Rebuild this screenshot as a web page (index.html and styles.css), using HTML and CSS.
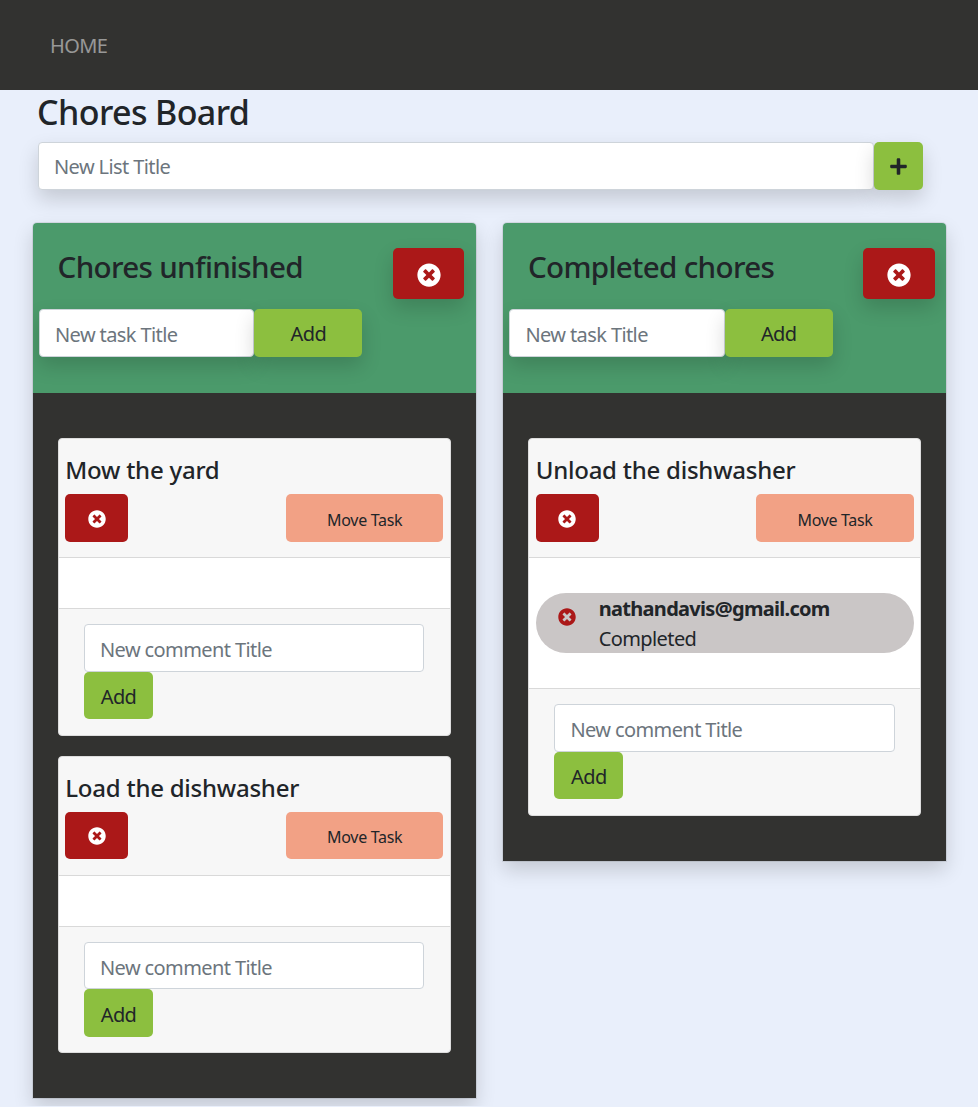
FILE: index.html
```html
<!DOCTYPE html>
<html lang="en">
<head>
<meta charset="utf-8">
<title>Chores Board</title>
<link rel="stylesheet" href="styles.css">
</head>
<body>
<svg class="defs" aria-hidden="true">
  <symbol id="times" viewBox="0 0 512 512"><path d="M256 8C119 8 8 119 8 256s111 248 248 248 248-111 248-248S393 8 256 8zm121.6 313.1c4.7 4.7 4.7 12.3 0 17L338 377.6c-4.7 4.7-12.3 4.7-17 0L256 312l-65.1 65.6c-4.7 4.7-12.3 4.7-17 0L134.4 338c-4.7-4.7-4.7-12.3 0-17l65.6-65-65.6-65.1c-4.7-4.7-4.7-12.3 0-17l39.6-39.6c4.7-4.7 12.3-4.7 17 0l65 65.7 65.1-65.6c4.7-4.7 12.3-4.7 17 0l39.6 39.6c4.7 4.7 4.7 12.3 0 17L312 256l65.6 65.1z"/></symbol>
  <symbol id="plus" viewBox="0 0 448 512"><path d="M416 208H272V64c0-17.67-14.33-32-32-32h-32c-17.67 0-32 14.33-32 32v144H32c-17.67 0-32 14.33-32 32v32c0 17.67 14.33 32 32 32h144v144c0 17.67 14.33 32 32 32h32c17.67 0 32-14.33 32-32V304h144c17.67 0 32-14.33 32-32v-32c0-17.67-14.33-32-32-32z"/></symbol>
</svg>
<nav class="nav"><a class="nav-link" href="#">HOME</a></nav>
<main class="page">
  <h1 class="page-title">Chores Board</h1>
  <form class="new-list">
    <input class="field shadow field-list" placeholder="New List Title">
    <button class="btn green shadow btn-plus" type="button"><svg class="ico-plus"><use href="#plus"/></svg></button>
  </form>
  <div class="board">
    <section class="list">
      <header class="list-head">
        <div class="list-top">
          <h2 class="list-title">Chores unfinished</h2>
          <button class="btn red shadow btn-del-list" type="button"><svg class="ico-lg"><use href="#times"/></svg></button>
        </div>
        <form class="new-task">
          <input class="field shadow field-task" placeholder="New task Title">
          <button class="btn green shadow btn-add-task" type="button">Add</button>
        </form>
      </header>
      <div class="list-body">
        <article class="card">
          <div class="card-head">
            <h3 class="card-title">Mow the yard</h3>
            <div class="card-actions">
              <button class="btn red btn-del-card" type="button"><svg class="ico-sm"><use href="#times"/></svg></button>
              <button class="btn salmon btn-move" type="button">Move Task</button>
            </div>
          </div>
          <div class="card-comments"></div>
          <form class="card-foot">
            <input class="field field-comment" placeholder="New comment Title">
            <button class="btn green btn-add-comment" type="button">Add</button>
          </form>
        </article>
        <article class="card">
          <div class="card-head">
            <h3 class="card-title">Load the dishwasher</h3>
            <div class="card-actions">
              <button class="btn red btn-del-card" type="button"><svg class="ico-sm"><use href="#times"/></svg></button>
              <button class="btn salmon btn-move" type="button">Move Task</button>
            </div>
          </div>
          <div class="card-comments"></div>
          <form class="card-foot">
            <input class="field field-comment" placeholder="New comment Title">
            <button class="btn green btn-add-comment" type="button">Add</button>
          </form>
        </article>
      </div>
    </section>
    <section class="list">
      <header class="list-head">
        <div class="list-top">
          <h2 class="list-title">Completed chores</h2>
          <button class="btn red shadow btn-del-list" type="button"><svg class="ico-lg"><use href="#times"/></svg></button>
        </div>
        <form class="new-task">
          <input class="field shadow field-task" placeholder="New task Title">
          <button class="btn green shadow btn-add-task" type="button">Add</button>
        </form>
      </header>
      <div class="list-body">
        <article class="card">
          <div class="card-head">
            <h3 class="card-title">Unload the dishwasher</h3>
            <div class="card-actions">
              <button class="btn red btn-del-card" type="button"><svg class="ico-sm"><use href="#times"/></svg></button>
              <button class="btn salmon btn-move" type="button">Move Task</button>
            </div>
          </div>
          <div class="card-comments has-comment">
            <div class="comment">
              <svg class="ico-comment"><use href="#times"/></svg>
              <div class="comment-text">
                <strong class="comment-author">nathandavis@gmail.com</strong>
                <span class="comment-body">Completed</span>
              </div>
            </div>
          </div>
          <form class="card-foot">
            <input class="field field-comment" placeholder="New comment Title">
            <button class="btn green btn-add-comment" type="button">Add</button>
          </form>
        </article>
      </div>
    </section>
  </div>
</main>
</body>
</html>
```
FILE: styles.css
```css
* { box-sizing: border-box; }
html, body { margin: 0; padding: 0; }
body {
  background: #e9effb;
  color: #212529;
  font-family: "Noto Sans", "Open Sans", sans-serif;
  font-size: 20px;
  letter-spacing: -0.03em;
}
.defs { display: none; }
h1, h2, h3 { margin: 0; font-weight: 500; }

.nav { height: 90px; background: #323230; display: flex; align-items: center; padding: 2px 0 0 50px; }
.nav-link { color: rgba(255,255,255,.5); text-decoration: none; font-size: 20px; line-height: 28px; }

.page { padding: 0 0 8px 33px; }
.page-title { font-size: 34px; line-height: 44px; margin: 0 0 8px 4px; }

.new-list { display: flex; margin-left: 5px; height: 48px; }
.field {
  height: 48px; background: #fff; border: 1px solid #ced4da; border-radius: 4px;
  font: inherit; letter-spacing: inherit; font-size: 20px; color: #495057; padding: 0 15px; outline: 0; min-width: 0;
}
.field::placeholder { color: #6c757d; opacity: 1; }
.field-list { width: 836px; }
.btn { border: 0; border-radius: 5px; font: inherit; letter-spacing: inherit; color: #212529; padding: 0; display: flex; align-items: center; justify-content: center; }
.shadow { box-shadow: 0 9px 20px rgba(0,0,0,.16); }
.green { background: #8cbf3f; }
.red { background: #ab1818; }
.salmon { background: #f2a185; }
.btn-plus { width: 49px; height: 48px; }
.ico-plus { width: 17px; height: 19px; fill: #212529; }
.ico-lg { width: 24px; height: 24px; fill: #fff; margin-top: 2px; }
.ico-sm { width: 18px; height: 18px; fill: #fff; margin-top: 2px; }

.board { display: flex; align-items: flex-start; gap: 27.4px; margin-top: 33px; }
.list { width: 443px; border-radius: 4px 4px 0 0; box-shadow: 0 0 0 1px rgba(0,0,0,.08), 0 9px 20px rgba(0,0,0,.16); overflow: hidden; }
.list-head { background: #4b9a6b; height: 170px; padding: 25px 11.7px 0 6px; }
.list-top { display: flex; justify-content: space-between; height: 61px; }
.list-title { font-size: 29.6px; line-height: 38px; padding-left: 18.6px; letter-spacing: -0.023em; }
.btn-del-list { width: 71.3px; height: 51px; }
.new-task { display: flex; height: 48px; }
.field-task { width: 215.3px; padding-top: 2px; }
.btn-add-task { width: 108px; height: 48px; }

.list-body { background: #323230; padding: 45px 25px; display: flex; flex-direction: column; gap: 20px; }
.card { background: #f7f7f7; border-radius: 4px; overflow: hidden; border: 1px solid #ddd; }
.card-head { padding: 12px 6.6px 15.4px 6.3px; border-bottom: 1px solid #d9d9d9; }
.card-title { font-size: 24px; line-height: 38px; padding-bottom: 5px; letter-spacing: -0.01em; }
.card-actions { display: flex; justify-content: space-between; height: 47.8px; }
.btn-del-card { width: 63px; }
.btn-move { width: 157.5px; font-size: 16px; padding-top: 4px; letter-spacing: -0.02em; }
.card-comments { background: #fff; height: 50px; }
.card-comments.has-comment { height: 130px; padding: 35px 6.6px 35px 6.3px; }
.comment { background: #cac6c6; border-radius: 30px; height: 60px; display: flex; align-items: center; padding-left: 22px; overflow: hidden; }
.ico-comment { width: 18px; height: 18px; fill: #ab1818; flex: none; margin-right: 23px; margin-top: -12px; }
.comment-text { display: flex; flex-direction: column; padding-top: 2px; }
.comment-author { font-weight: 700; line-height: 30px; letter-spacing: -0.035em; }
.comment-body { line-height: 30px; }
.card-foot { border-top: 1px solid #d9d9d9; padding: 15px 0 15.4px 25px; }
.field-comment { display: block; width: 340.4px; height: 47.6px; padding-top: 3px; }
.btn-add-comment { width: 69px; height: 47.4px; padding-top: 2px; }
```
